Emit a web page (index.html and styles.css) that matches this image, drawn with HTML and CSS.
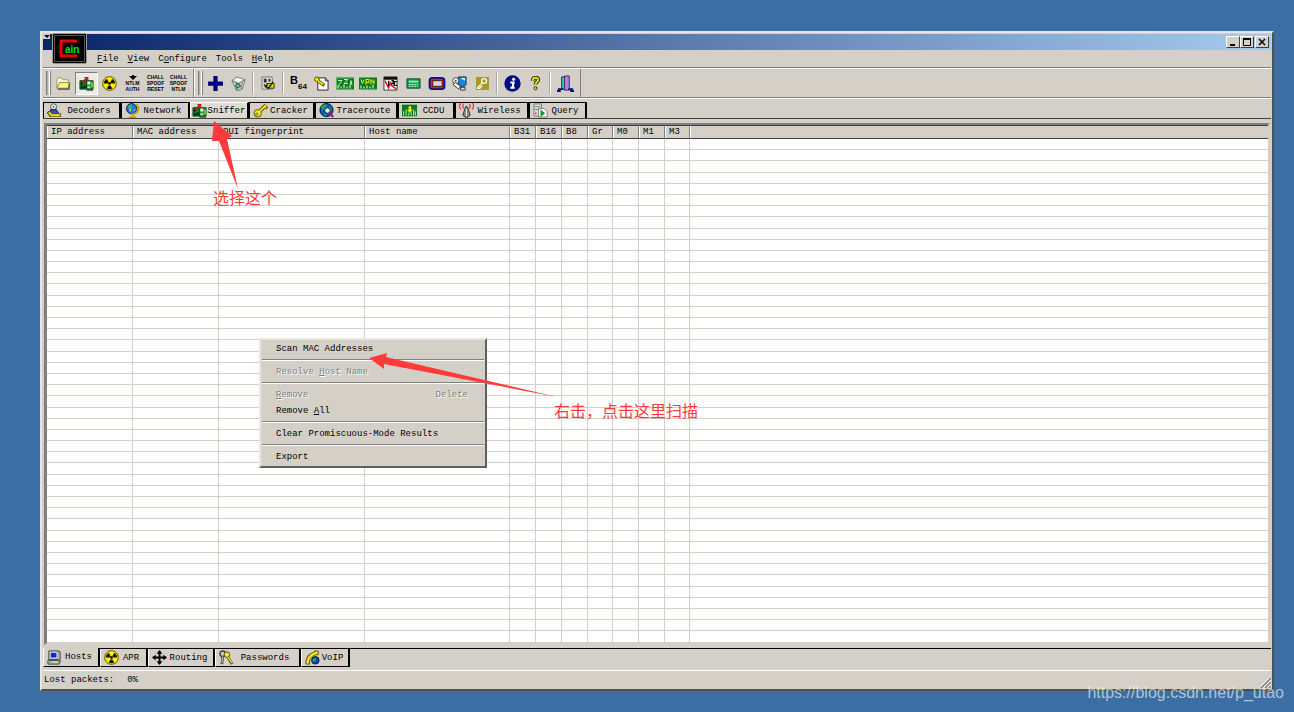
FILE: index.html
```html
<!DOCTYPE html>
<html lang="en">
<head>
<meta charset="utf-8">
<title>Cain</title>
<link rel="stylesheet" href="styles.css">
</head>
<body>
<svg class="defs" aria-hidden="true">
  <symbol id="i-folder" viewBox="0 0 16 16"><path d="M1 13V4l1-2h4l1 2h6v3" fill="#fffbe0" stroke="#9a9a50"/><path d="M1 13 4 7h11l-2 6z" fill="#fff980" stroke="#8a8a40"/><path d="M2 14h12V8" fill="none" stroke="#222"/></symbol>
  <symbol id="i-sniffer" viewBox="0 0 16 16"><path d="M1 5h7v9H1z" fill="#127a2c" stroke="#042"/><path d="M8 5h7v9H8z" fill="#1a9a3c" stroke="#042"/><path d="M2 7h2v2H2zm0 4h2v2H2zm3-1h2v3H5z" fill="#111"/><path d="M9 6h3v3H9z" fill="#fff"/><path d="M9 11h3v2H9z" fill="#bde8bd"/><path d="M14 7v5" stroke="#ffe800"/><path d="m3 7 5-4" stroke="#d01010" stroke-width="2"/><path d="M5 1h5v4z" fill="#d01010"/><path d="M8 15h7" stroke="#111"/></symbol>
  <symbol id="i-rad" viewBox="0 0 16 16"><circle cx="8" cy="8" r="7.300" fill="#ffee00" stroke="#554d00"/><g fill="#111"><path d="M2 8a6 6 0 0 1 3-5.200L7 6.500 6 8z"/><path d="M14 8a6 6 0 0 0-3-5.200L9 6.500 10 8z"/><path d="M5 13.200a6 6 0 0 0 6 0L9 10H7z"/><circle cx="8" cy="8" r="1.500"/></g></symbol>
  <symbol id="i-plus" viewBox="0 0 16 16"><path d="M6 1h4v5h5v4h-5v5H6v-5H1V6h5z" fill="#000080"/></symbol>
  <symbol id="i-trash" viewBox="0 0 16 16"><path d="m1 5 5-4 9 3-3 10-6 2z" fill="#d5d8d4" stroke="#777"/><path d="m1 5 7 3 7-4M8 8 6 15" stroke="#666" fill="none"/><path d="m3 4 4-2 6 2-5 3z" fill="#fafafa"/><path d="M12 6 11 14l-3 1" stroke="#888" fill="none"/><path d="m5 11 1-3 3 1 1 2-3 2z" fill="none" stroke="#119043" stroke-width="1.500"/></symbol>
  <symbol id="i-addlist" viewBox="0 0 16 16"><path d="M1 1h11v13H1z" fill="#ddd" stroke="#777"/><path d="M3 3h3v4H3zm5 0h2v3H8z" fill="#333"/><path d="M6 8h8v5H6z" fill="#e6d000" stroke="#333"/><path d="m3 9 5 4 5-7M4 12l3-3" stroke="#222" fill="none" stroke-width="1.500"/></symbol>
  <symbol id="i-keydoc" viewBox="0 0 16 16"><path d="M4 2h8l3 3v10H4z" fill="#fff" stroke="#222"/><path d="M12 2v3h3" fill="none" stroke="#222"/><circle cx="3" cy="3.500" r="2.500" fill="#f3e300" stroke="#554f00"/><path d="m4 5 7 5" stroke="#554f00" stroke-width="3.500"/><path d="m4 5 6 4" stroke="#f3e300" stroke-width="2"/></symbol>
  <symbol id="i-rsa" viewBox="0 0 18 12"><path d="M0 0h18v12H0z" fill="#087c1a"/><path d="M0 .5h18M.5 0v12" stroke="#5ab86a"/><path d="M2 3h4l-3 4v2M8 2h4l-4 4h4M14 8l1-5 1 5" stroke="#c0f0c0" fill="none"/><path d="M2 11V8m3 3V9m3 2V7m3 4V9m3 2V8" stroke="#fff"/></symbol>
  <symbol id="i-vpn" viewBox="0 0 18 12"><path d="M0 0h18v12H0z" fill="#087c1a"/><path d="m2 2 1.500 4L5 2M7 7V2h3v3H7m5 2V2l3 4V2" stroke="#f8f020" fill="none"/><path d="M2 11V8m3 3V9m3 2V8m3 3V9m3 2V7" stroke="#fff"/></symbol>
  <symbol id="i-rdp" viewBox="0 0 16 16"><path d="M1 1h14v14H1z" fill="#fff" stroke="#333"/><path d="M1 2.500h14" stroke="#111" stroke-width="3"/><path d="M6 5v6M9 5h2v3H9v3M15 6h-3v4h3" stroke="#111" fill="none" stroke-width="1.500"/><path d="M2 5 6 13 8 6M8 9l6 5" stroke="#e01020" stroke-width="1.500" fill="none"/></symbol>
  <symbol id="i-calc" viewBox="0 0 16 12"><path d="M1 1h14v10H1z" fill="#13975a" stroke="#04552c"/><path d="M3 3h10v2H3z" fill="#a8e8a8"/><path d="M3 7h10M3 9h10" stroke="#e8ffe8" stroke-dasharray="2 1"/></symbol>
  <symbol id="i-box" viewBox="0 0 18 14"><rect x="1" y="1" width="16" height="12" rx="3" fill="#f01818" stroke="#001090" stroke-width="2"/><rect x="4.500" y="4" width="10" height="6" fill="#d8d8d8" stroke="#222"/></symbol>
  <symbol id="i-phones" viewBox="0 0 16 16"><path d="M7 1h8v8l-3 3-5-2z" fill="#1686e8" stroke="#223"/><path d="M9 2h5v3z" fill="#dff"/><circle cx="4" cy="5" r="3.300" fill="#eee" stroke="#444"/><circle cx="4" cy="5" r="1" fill="#444"/><path d="m1 9 6 5 2-3-5-4z" fill="#fff" stroke="#333"/><path d="M9 12h5v3H9z" fill="#ddd" stroke="#333"/></symbol>
  <symbol id="i-key" viewBox="0 0 16 16"><path d="M0 0h16v16H0z" fill="#a69a28"/><circle cx="10" cy="5" r="3" fill="none" stroke="#fff" stroke-width="1.500"/><path d="m8 7-6 6v1h3v-2h2v-2" fill="none" stroke="#fff" stroke-width="1.300"/></symbol>
  <symbol id="i-info" viewBox="0 0 16 16"><circle cx="8" cy="8" r="7.700" fill="#001080"/><circle cx="9" cy="4" r="1.500" fill="#fff"/><path d="M6 7h3l-1 5h2M6 12h2" stroke="#fff" stroke-width="2" fill="none"/></symbol>
  <symbol id="i-help" viewBox="0 0 16 16"><path d="M5 5c0-4 6-4 6-1 0 2-3 2-3 5" fill="none" stroke="#222" stroke-width="4"/><path d="M5 5c0-4 6-4 6-1 0 2-3 2-3 5" fill="none" stroke="#f2e600" stroke-width="2"/><circle cx="8" cy="13" r="1.700" fill="#f2e600" stroke="#222"/></symbol>
  <symbol id="i-door" viewBox="0 0 18 18"><path d="M5 15V2h5v13" fill="#29d2c8" stroke="#222"/><path d="M8 1h5v15H8z" fill="#b184d8" stroke="#426"/><path d="M1 15h6M12 15h5M0 17h4M14 17h4" stroke="#001080" stroke-width="2"/></symbol>
  <symbol id="i-decoders" viewBox="0 0 16 16"><circle cx="7" cy="4" r="3.200" fill="#eee" stroke="#555"/><circle cx="7" cy="4" r="1" fill="#555"/><path d="M4 7h6l3 5H3z" fill="#2950c8" stroke="#223"/><path d="M1 9l3 4h11" stroke="#665c00" stroke-width="4" fill="none"/><path d="M2 10l3 3h9" stroke="#f2df20" stroke-width="2" fill="none"/></symbol>
  <symbol id="i-network" viewBox="0 0 16 16"><circle cx="7" cy="6" r="5.500" fill="#1f6ff0" stroke="#123"/><path d="m3 4 4-3 1 4-3 2zM8 7l4-1-2 4z" fill="#40b860"/><path d="m4 6 3 1-1 3z" fill="#f0b830"/><path d="M12 1c5 5 1 11-5 11M8 12v3M4 15h8" stroke="#c0a800" stroke-width="2" fill="none"/></symbol>
  <symbol id="i-cracker" viewBox="0 0 16 16"><path d="m6 10 8-8" stroke="#5d5400" stroke-width="4"/><path d="M12 3l3 3" stroke="#5d5400" stroke-width="3"/><circle cx="5" cy="11" r="4" fill="#f5e41a" stroke="#5d5400"/><path d="m6 10 8-8M12 4l2 1" stroke="#f5e41a" stroke-width="2"/><circle cx="4" cy="12" r="1.200" fill="#fff" stroke="#5d5400"/></symbol>
  <symbol id="i-trace" viewBox="0 0 16 16"><circle cx="8" cy="7.500" r="7" fill="#1550d0" stroke="#012"/><path d="m2 4 4-3 3 2-5 5zM11 3l3 4-3 3zM4 10l4 2-1 2z" fill="#19a850"/><circle cx="9" cy="8" r="3" fill="#c9f2ff" stroke="#111"/><path d="m11 10 4 5" stroke="#a01090" stroke-width="2.500"/></symbol>
  <symbol id="i-ccdu" viewBox="0 0 18 14"><path d="M0 0h18v14H0z" fill="#087c1a"/><path d="M2 13V8m3 5V6m3 7v-3m3 3V9m3 4V6m2 7V8" stroke="#ddffdd"/><path d="M8 2h3v4h2l-3.500 4L6 6h2z" fill="#fff020"/></symbol>
  <symbol id="i-wireless" viewBox="0 0 16 16"><path d="M2 0Q-1 3 2 7M5 1Q3 3 5 6M14 0q3 3 0 7M11 1q2 2 0 5" fill="none" stroke="#f03030" stroke-width="1.200"/><path d="M7 4h2l3 9-4 3-4-3z" fill="#888" stroke="#333"/><path d="M8 6v8" stroke="#eee"/></symbol>
  <symbol id="i-query" viewBox="0 0 16 16"><path d="M1 1h8v13H1z" fill="#ddd" stroke="#777"/><path d="M2 4h6M2 7h6" stroke="#777"/><circle cx="3" cy="11" r="1" fill="#d22"/><path d="M6 6h6l3 3v6H6z" fill="#fff" stroke="#777"/><path d="m8 7 5 4-5 4z" fill="#089a28"/></symbol>
  <symbol id="i-hosts" viewBox="0 0 16 16"><path d="M2 1h10v9H2z" fill="#ddd" stroke="#333"/><path d="M4 3h6v5H4z" fill="#0828e0"/><path d="M12 1l2 1v8l-2 1M1 11h12v4H1z" fill="#ccc" stroke="#333"/><path d="m13 12 2-2v3l-2 2z" fill="#777"/><path d="M2 13h3" stroke="#1c3"/></symbol>
  <symbol id="i-routing" viewBox="0 0 16 16"><path d="M8 1v14M1 8h14" stroke="#000" stroke-width="2"/><path d="m8 0 3 4H5zM8 16l3-4H5zM0 8l4-3v6zM16 8l-4-3v6z"/></symbol>
  <symbol id="i-pass" viewBox="0 0 16 16"><circle cx="4" cy="4" r="3" fill="#ccc" stroke="#444" stroke-width="1.500"/><path d="M4 7 3 15" stroke="#555" stroke-width="3"/><path d="M4 7 3 14" stroke="#ccc"/><circle cx="8.500" cy="5" r="3" fill="#eee050" stroke="#554d00"/><path d="m9 7 5 8M11 12l2-1" stroke="#554d00" stroke-width="3"/><path d="m9 7 5 7" stroke="#f4e330" stroke-width="1.500"/></symbol>
  <symbol id="i-voip" viewBox="0 0 16 16"><path d="M3 14Q2 5 13 3" stroke="#5d5400" stroke-width="4" fill="none"/><path d="M1 11h4v4H1zM10 1h4v4h-4z" fill="#f3e31d" stroke="#5d5400"/><path d="M3 13Q3 6 12 3" stroke="#f3e31d" stroke-width="2.500" fill="none"/><circle cx="11" cy="11" r="4" fill="#1741c0" stroke="#012"/><path d="m8 10 3-2 1 3-3 2z" fill="#20b050"/></symbol>
</svg>

<main class="window">
  <header class="titlebar">
    <span class="sysmenu"></span>
    <svg class="logo" viewBox="0 0 35 31" role="img" aria-label="Cain">
      <rect x="0" y="0" width="35" height="31" rx="2" fill="#999"/>
      <rect x="1" y="1" width="33" height="29" rx="1" fill="#000"/>
      <rect x="2.500" y="2.500" width="30" height="26" fill="none" stroke="#555"/>
      <path d="M25 8H9v15h16" fill="none" stroke="#f00000" stroke-width="3"/>
      <text x="13" y="20" class="logo-text">ain</text>
    </svg>
    <div class="captions">
      <button aria-label="Minimize"><svg viewBox="0 0 12 10"><path d="M3 8h5" stroke="#000" stroke-width="2"/></svg></button>
      <button aria-label="Maximize"><svg viewBox="0 0 12 10"><path d="M2.500 2v6.500h7V2" fill="none" stroke="#000"/><path d="M2 2h8" stroke="#000" stroke-width="2"/></svg></button>
      <button aria-label="Close" class="close"><svg viewBox="0 0 12 10"><path d="m3 2 6 6M9 2 3 8" stroke="#000" stroke-width="1.500"/></svg></button>
    </div>
  </header>

  <nav class="menubar">
    <button><u>F</u>ile</button><button><u>V</u>iew</button><button>C<u>o</u>nfigure</button><button>Tools</button><button><u>H</u>elp</button>
  </nav>

  <div class="toolbar" role="toolbar">
    <div class="band">
      <span class="grip"></span>
      <button aria-label="Open"><svg><use href="#i-folder"/></svg></button>
      <button aria-label="Start sniffer" class="pressed"><svg><use href="#i-sniffer"/></svg></button>
      <button aria-label="Start APR"><svg><use href="#i-rad"/></svg></button>
      <button class="lettered"><svg class="arrow" viewBox="0 0 8 5"><path d="M3 0h2v1h3L4 5 0 1h3z"/></svg><span>NTLM</span><span>AUTH</span></button>
      <button class="lettered"><span>CHALL</span><span>SPOOF</span><span>RESET</span></button>
      <button class="lettered"><span>CHALL</span><span>SPOOF</span><span>NTLM</span></button>
    </div>
    <div class="band">
      <span class="grip"></span>
      <button aria-label="Add"><svg class="large"><use href="#i-plus"/></svg></button>
      <button aria-label="Remove"><svg><use href="#i-trash"/></svg></button>
      <span class="sep"></span>
      <button aria-label="Wordlist"><svg><use href="#i-addlist"/></svg></button>
      <span class="sep"></span>
      <button class="base64"><b>B</b><small>64</small></button>
      <button aria-label="Key file"><svg><use href="#i-keydoc"/></svg></button>
      <button aria-label="RSA token"><svg class="wide"><use href="#i-rsa"/></svg></button>
      <button aria-label="VPN"><svg class="wide"><use href="#i-vpn"/></svg></button>
      <button aria-label="RDP"><svg><use href="#i-rdp"/></svg></button>
      <button aria-label="Calculator"><svg><use href="#i-calc"/></svg></button>
      <button aria-label="Box revealer"><svg class="wide"><use href="#i-box"/></svg></button>
      <button aria-label="Remote"><svg><use href="#i-phones"/></svg></button>
      <button aria-label="Keys"><svg class="small"><use href="#i-key"/></svg></button>
      <span class="sep"></span>
      <button aria-label="About"><svg class="large"><use href="#i-info"/></svg></button>
      <button aria-label="Help"><svg><use href="#i-help"/></svg></button>
      <span class="sep"></span>
      <button aria-label="Exit"><svg class="large"><use href="#i-door"/></svg></button>
    </div>
  </div>

  <nav class="tabs tabs-top" role="tablist">
    <button role="tab"><svg><use href="#i-decoders"/></svg><span>Decoders</span></button>
    <button role="tab"><svg><use href="#i-network"/></svg><span>Network</span></button>
    <button role="tab" class="selected" aria-selected="true"><svg><use href="#i-sniffer"/></svg><span>Sniffer</span></button>
    <button role="tab"><svg><use href="#i-cracker"/></svg><span>Cracker</span></button>
    <button role="tab"><svg><use href="#i-trace"/></svg><span>Traceroute</span></button>
    <button role="tab"><svg><use href="#i-ccdu"/></svg><span>CCDU</span></button>
    <button role="tab"><svg><use href="#i-wireless"/></svg><span>Wireless</span></button>
    <button role="tab"><svg><use href="#i-query"/></svg><span>Query</span></button>
  </nav>

  <section class="list">
    <table>
      <colgroup><col class="c-addr"><col class="c-addr"><col class="c-wide"><col class="c-host"><col class="c-flag"><col class="c-flag"><col class="c-flag"><col class="c-thin"><col class="c-flag"><col class="c-flag"><col class="c-thin"><col></colgroup>
      <thead><tr><th>IP address</th><th>MAC address</th><th>OUI fingerprint</th><th>Host name</th><th>B31</th><th>B16</th><th>B8</th><th>Gr</th><th>M0</th><th>M1</th><th>M3</th><th></th></tr></thead>
      <tbody id="hosts"></tbody>
    </table>
  </section>

  <nav class="tabs tabs-bottom" role="tablist">
    <button role="tab" class="selected" aria-selected="true"><svg><use href="#i-hosts"/></svg><span>Hosts</span></button>
    <button role="tab"><svg><use href="#i-rad"/></svg><span>APR</span></button>
    <button role="tab"><svg><use href="#i-routing"/></svg><span>Routing</span></button>
    <button role="tab"><svg><use href="#i-pass"/></svg><span>Passwords</span></button>
    <button role="tab"><svg><use href="#i-voip"/></svg><span>VoIP</span></button>
  </nav>

  <footer class="status">
    <span>Lost packets:</span><span>0%</span>
    <svg class="resize" viewBox="0 0 11 11"><path d="M1 11 11 1M5 11l6-6M9 11l2-2" stroke="#808080" stroke-width="1.500"/><path d="M0 10 10 0M4 10l7-7M8 10l3-3" stroke="#fff"/></svg>
  </footer>
</main>

<div class="popup" role="menu">
  <button role="menuitem">Scan MAC Addresses</button>
  <hr>
  <button role="menuitem" disabled>Resolve <u>H</u>ost Name</button>
  <hr>
  <button role="menuitem" disabled><span><u>R</u>emove</span><span>Delete</span></button>
  <button role="menuitem">Remove <u>A</u>ll</button>
  <hr>
  <button role="menuitem">Clear Promiscuous-Mode Results</button>
  <hr>
  <button role="menuitem">Export</button>
</div>

<svg class="pointer pointer-tab" viewBox="0 0 26 68"><path d="M2 0 20 15 15 18 26 68 7 20 0 20z"/></svg>
<p class="note note-tab">选择这个</p>
<svg class="pointer pointer-menu" viewBox="0 0 188 44"><path d="M0 5 18 0 17 4 188 44 15 11V16z"/></svg>
<p class="note note-menu">右击，点击这里扫描</p>
<p class="watermark">https://blog.csdn.net/p_utao</p>
<script src="hosts.js"></script>
</body>
</html>
```
FILE: styles.css
```css
:root {
  --face: #d4d0c8;
  --shade: #808080;
  --dark: #404040;
}
* { box-sizing: border-box; }
body {
  margin: 0;
  height: 100vh;
  padding: 31px 20px 21px 40px;
  display: flex;
  background: #3a6ea5;
  font: 9px/12px "Liberation Mono", "Noto Sans CJK SC", monospace;
  color: #000;
  position: relative;
  overflow: hidden;
}
button {
  font: inherit;
  color: inherit;
  background: none;
  border: 0;
  padding: 0;
  margin: 0;
  white-space: nowrap;
}
p { margin: 0; }
.defs { position: absolute; width: 0; height: 0; }

.window {
  flex: 1;
  display: flex;
  flex-direction: column;
  min-width: 0;
  padding: 1px;
  background: var(--face);
  border: 2px solid;
  border-color: #e8e6e0 #505050 #505050 #e8e6e0;
}

.titlebar {
  height: 16px;
  display: flex;
  justify-content: space-between;
  align-items: center;
  background: linear-gradient(to right, #0a246a, #a6caf0);
  position: relative;
}
.sysmenu {
  width: 8px;
  height: 6px;
  align-self: flex-start;
  background: var(--face);
  border: solid #222;
  border-width: 0 1px 1px 0;
}
.sysmenu::before {
  content: "";
  display: block;
  width: 0;
  margin: 1px;
  border: 3px solid transparent;
  border-top-color: #000;
  border-bottom: 0;
}
.logo { position: absolute; left: 9px; top: -1px; width: 35px; height: 31px; z-index: 1; }
.logo-text { font: bold 10px "Liberation Sans", sans-serif; fill: #00e000; }
.captions { display: flex; padding-right: 2px; }
.captions button {
  width: 14px;
  height: 12px;
  background: var(--face);
  border: 1px solid;
  border-color: #fff var(--dark) var(--dark) #fff;
  display: flex;
}
.captions svg { width: 12px; height: 10px; }
.captions .close { margin-left: 1px; }

.menubar {
  height: 18px;
  display: flex;
  gap: 9px;
  padding-left: 54px;
  border-bottom: 1px solid var(--shade);
}

.toolbar {
  display: flex;
  height: 30px;
  border-top: 1px solid #fff;
  border-bottom: 1px solid var(--shade);
  box-shadow: 0 1px #fff;
}
.band {
  display: flex;
  align-items: center;
  padding: 0 3px;
  border-right: 1px solid var(--shade);
}
.band + .band { border-left: 1px solid #fff; }
.band button {
  width: 23px;
  height: 23px;
  display: flex;
  align-items: center;
  justify-content: center;
}
.band svg { width: 15px; height: 15px; }
.band svg.wide { width: 18px; height: 13px; }
.band svg.small { width: 13px; height: 13px; }
.band svg.large { width: 17px; height: 17px; }
.band button.pressed {
  background: #eceae6;
  border: 1px solid;
  border-color: var(--shade) #fff #fff var(--shade);
}
.grip {
  width: 5px;
  height: 24px;
  margin-right: 1px;
  border: solid;
  border-width: 0 1px;
  border-color: #fff var(--shade);
  box-shadow: inset 1px 0 #aaa, inset -1px 0 #fff;
}
.sep { width: 2px; height: 22px; margin: 0 3px 0 2px; border-left: 1px solid #a8a6a0; border-right: 1px solid #fff; }
.band .lettered { flex-direction: column; font: bold 5px/6px "Liberation Sans", sans-serif; }
.band .arrow { width: 8px; height: 5px; }
.base64 b { font: bold 11px/11px "Liberation Sans", sans-serif; padding-bottom: 5px; }
.base64 small { font: bold 8px/8px "Liberation Sans", sans-serif; padding-top: 8px; }

.tabs { display: grid; flex: none; }
.tabs button {
  display: flex;
  align-items: center;
  padding: 0 3px;
  border: 1px solid #000;
  border-left-color: #fff;
  border-right-width: 2px;
}
.tabs span { flex: 1; text-align: center; }
.tabs svg { width: 15px; height: 15px; }
.tabs-top {
  grid-template-columns: 78px 69px 59px 66px 83px 57px 74px 58px;
  height: 17px;
  margin-top: 4px;
  border-bottom: 1px solid var(--dark);
}
.tabs-top button { border-bottom: 0; border-left-color: #000; }
.tabs-top .selected { border-top-color: #fff; border-left-color: #fff; padding: 0 1px; background: #dedbd5; }
.tabs-bottom {
  grid-template-columns: 57px 48px 67px 86px 49px;
  height: 19px;
  border-top: 1px solid #000;
}
.tabs-bottom button { border-top: 0; }
.tabs-bottom .selected { background: var(--face); margin-top: -1px; }

.list {
  flex: 1;
  min-height: 0;
  margin: 4px 1px 3px;
  background: #fff;
  border: 2px solid;
  border-left-width: 3px;
  border-color: var(--shade) var(--face) var(--face) var(--shade);
}
table {
  width: 100%;
  height: 100%;
  table-layout: fixed;
  border-collapse: separate;
  border-spacing: 0;
}
.c-addr { width: 86px; }
.c-wide { width: 146px; }
.c-host { width: 145px; }
.c-flag { width: 26px; }
.c-thin { width: 25px; }
th {
  height: 14px;
  padding: 0 0 0 4px;
  font-weight: normal;
  text-align: left;
  white-space: nowrap;
  background: var(--face);
  border-top: 1px solid var(--dark);
  border-bottom: 1px solid var(--dark);
  border-right: 1px solid var(--shade);
  box-shadow: inset 1px 0 #fff;
}
td { padding: 0; border-right: 1px solid var(--face); border-bottom: 1px solid var(--face); }
th:last-child, td:last-child { border-right: 0; }

.status {
  height: 18px;
  margin-top: 3px;
  display: flex;
  align-items: center;
  gap: 13px;
  padding-left: 1px;
  border-top: 1px solid #fff;
}
.resize { width: 11px; height: 11px; margin-left: auto; align-self: flex-end; }

.popup {
  position: absolute;
  left: 259px;
  top: 338px;
  width: 228px;
  padding: 1px;
  background: var(--face);
  border: 2px solid;
  border-color: #e8e6e0 #606060 #606060 #e8e6e0;
}
.popup button {
  display: flex;
  width: 100%;
  height: 16px;
  align-items: center;
  padding: 0 16px 0 14px;
  white-space: pre;
}
.popup button span + span { margin-left: auto; }
.popup button:disabled { color: var(--shade); text-shadow: 1px 1px #fff; }
.popup hr { height: 2px; margin: 2px 0 3px; border: solid; border-width: 1px 0; border-color: var(--shade) #fff #fff; }

.pointer { position: absolute; fill: #ff3a3a; }
.pointer-tab { left: 212px; top: 121px; width: 26px; height: 68px; }
.pointer-menu { left: 369px; top: 353px; width: 188px; height: 44px; }
.note { position: absolute; font: 16px/24px "Noto Sans CJK SC", sans-serif; color: #ff3a3a; white-space: nowrap; }
.note-tab { left: 213px; top: 185px; }
.note-menu { left: 554px; top: 398px; }
.watermark {
  position: absolute;
  right: 10px;
  bottom: 9px;
  font: 16px/20px "Liberation Sans", sans-serif;
  color: rgba(255, 255, 255, .6);
}
```
FILE: hosts.js
```js
const body = document.getElementById("hosts");
for (let r = 0; r < 45; r++) {
  const row = body.insertRow();
  for (let c = 0; c < 12; c++) row.insertCell();
}
```
